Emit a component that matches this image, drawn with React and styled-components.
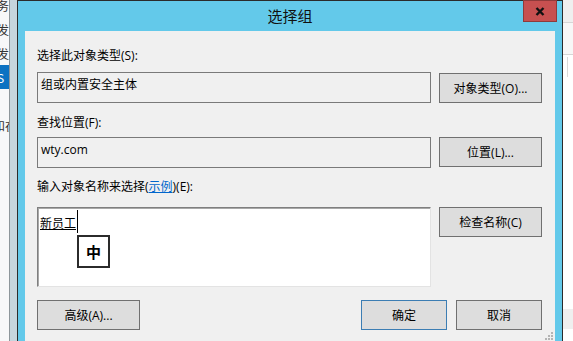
import React from "react";
import styled, { createGlobalStyle } from "styled-components";

const Global = createGlobalStyle`
  html, body { margin: 0; padding: 0; overflow: hidden; background: #fff; }
  body { font-family: "Open Sans", "Noto Sans CJK SC", sans-serif; font-size: 12px; }
`;

const Page = styled.div`
  display: flex;
  width: 573px;
  height: 341px;
  overflow: hidden;
  font-family: "Open Sans", "Noto Sans CJK SC", sans-serif;
`;

const BackList = styled.div`
  width: 9px;
  flex: none;
  background: #f7f8f9;
  display: flex;
  flex-direction: column;
  overflow: hidden;
`;

const BackRow = styled.div`
  height: 24px;
  flex: none;
  display: flex;
  align-items: center;
  white-space: nowrap;
  overflow: hidden;
  font-size: 12px;
  color: ${(p) => (p.$selected ? "#ffffff" : "#333333")};
  background: ${(p) => (p.$selected ? "#0c72c2" : "transparent")};
  font-family: "Noto Sans CJK SC", sans-serif;
  margin-top: ${(p) => p.$mt || 0}px;
`;

const BackText = styled.span`
  flex: none;
  margin-left: ${(p) => p.$shift || 0}px;
`;

const BackEdge = styled.div`
  width: 7px;
  flex: none;
  border-left: 1px solid #8d969b;
  background: #c6d5dd;
`;

const Dialog = styled.div`
  width: 546px;
  flex: none;
  box-sizing: border-box;
  height: 341px;
  background: #63c9ea;
  border: 1px solid #2b2b2b;
  border-bottom: none;
  display: flex;
  flex-direction: column;
`;

const TitleBar = styled.div`
  height: 30px;
  flex: none;
  display: grid;
  grid-template-columns: 1fr auto 1fr;
  align-items: start;
`;

const Title = styled.div`
  grid-column: 2;
  font-family: "Noto Sans CJK SC", sans-serif;
  font-size: 15px;
  line-height: 30px;
  color: #111;
`;

const CloseButton = styled.div`
  grid-column: 3;
  justify-self: end;
  margin-right: 5px;
  width: 34px;
  height: 22px;
  margin-top: -1px;
  box-sizing: border-box;
  background: #c75050;
  border: 1px solid #8f3a3a;
  display: flex;
  align-items: center;
  justify-content: center;
`;

const Content = styled.div`
  flex: 1;
  margin: 0 7px;
  background: #f0f0f0;
  padding: 17px 13px 0 12px;
  display: flex;
  flex-direction: column;
  position: relative;
`;

const Label = styled.div`
  font-size: 12px;
  line-height: 16px;
  height: 16px;
  color: #000;
  margin-top: ${(p) => p.$mt || 0}px;
  white-space: nowrap;
`;

const Link = styled.span`
  color: #0066cc;
  text-decoration: underline;
`;

const Row = styled.div`
  display: grid;
  grid-template-columns: 394px 103px;
  column-gap: 8px;
  align-items: start;
  margin-top: ${(p) => p.$mt || 0}px;
`;

const ReadBox = styled.div`
  box-sizing: border-box;
  height: 31px;
  border: 1px solid #7a7a7a;
  background: #f0f0f0;
  padding: 4px 3px;
  font-size: 12px;
  line-height: 16px;
  color: #000;
`;

const Button = styled.div`
  box-sizing: border-box;
  height: 30px;
  width: ${(p) => p.$w || 103}px;
  border: 1px solid ${(p) => (p.$default ? "#3c7db3" : "#707070")};
  background: #dddddd;
  display: flex;
  align-items: center;
  justify-content: center;
  font-size: 12px;
  color: #000;
  white-space: nowrap;
  margin-top: ${(p) => p.$mt || 0}px;
`;

const InputArea = styled.div`
  box-sizing: border-box;
  height: 80px;
  background: #fff;
  border-style: solid;
  border-width: 1px;
  border-color: #7f7f7f #e3e3e3 #e3e3e3 #7f7f7f;
  box-shadow: inset 1px 1px 0 #a8a8a8;
  padding: 7px 2px;
  font-size: 12px;
  line-height: 16px;
  position: relative;
  display: flex;
  align-items: flex-start;
`;

const Composition = styled.span`
  text-decoration: underline;
  font-family: "Noto Sans CJK SC", sans-serif;
  color: #000;
`;

const Caret = styled.span`
  display: inline-block;
  width: 1px;
  height: 23px;
  background: #000;
  margin-left: 1px;
  margin-top: -5px;
`;

const ImeBox = styled.div`
  position: absolute;
  left: 39px;
  top: 27px;
  width: 33px;
  height: 33px;
  box-sizing: border-box;
  border: 2px solid #2b2b2b;
  background: #fff;
  display: flex;
  align-items: center;
  justify-content: center;
  font-family: "Noto Sans CJK SC", sans-serif;
  font-weight: 700;
  font-size: 15px;
  color: #000;
`;

const BottomRow = styled.div`
  display: flex;
  align-items: center;
  margin-top: 13px;
  gap: 9px;
`;

const Spacer = styled.div`
  flex: 1;
`;

const Grip = styled.svg`
  position: absolute;
  right: 1px;
  bottom: 0;
`;

const BackRight = styled.div`
  width: 10px;
  flex: none;
  background: #ffffff;
  display: flex;
  flex-direction: column;
`;

const RightStrip = styled.div`
  height: ${(p) => p.$h}px;
  flex: none;
  background: ${(p) => p.$bg};
  border-bottom: ${(p) => (p.$line ? "1px solid #d6d6d6" : "none")};
  border-left: ${(p) => (p.$cell ? "1px solid #d9d9d9" : "none")};
  margin-left: ${(p) => (p.$cell ? 4 : 0)}px;
  margin-top: ${(p) => p.$mt || 0}px;
`;

export default function App() {
  return (
    <>
      <Global />
      <Page>
        <BackList>
          <BackRow $mt={-7}>
            <BackText $shift={-3}>务</BackText>
          </BackRow>
          <BackRow>
            <BackText $shift={-3}>发</BackText>
          </BackRow>
          <BackRow>
            <BackText $shift={-3}>发</BackText>
          </BackRow>
          <BackRow $selected>
            <BackText $shift={-3}>S</BackText>
          </BackRow>
          <BackRow />
          <BackRow>
            <BackText $shift={-7}>和在</BackText>
          </BackRow>
        </BackList>
        <BackEdge />
        <Dialog>
          <TitleBar>
            <Title>选择组</Title>
            <CloseButton>
              <svg width="10" height="9" viewBox="0 0 10 9">
                <path d="M1.5 1 L8.5 8 M8.5 1 L1.5 8" stroke="#111" strokeWidth="2.4" strokeLinecap="butt" />
              </svg>
            </CloseButton>
          </TitleBar>
          <Content>
            <Label>选择此对象类型(S):</Label>
            <Row $mt={8}>
              <ReadBox>组或内置安全主体</ReadBox>
              <Button $mt={1}>对象类型(O)...</Button>
            </Row>
            <Label $mt={12}>查找位置(F):</Label>
            <Row $mt={6}>
              <ReadBox>wty.com</ReadBox>
              <Button>位置(L)...</Button>
            </Row>
            <Label $mt={11}>
              输入对象名称来选择(<Link>示例</Link>)(E):
            </Label>
            <Row $mt={12}>
              <InputArea>
                <Composition>新员工</Composition>
                <Caret />
                <ImeBox>中</ImeBox>
              </InputArea>
              <Button>检查名称(C)</Button>
            </Row>
            <BottomRow>
              <Button $w={103}>高级(A)...</Button>
              <Spacer />
              <Button $w={86} $default>确定</Button>
              <Button $w={86}>取消</Button>
            </BottomRow>
            <Grip width="10" height="9" viewBox="0 0 10 9">
              <rect x="7" y="0" width="2" height="2" fill="#b4b4b4" />
              <rect x="4" y="3" width="2" height="2" fill="#b4b4b4" />
              <rect x="7" y="3" width="2" height="2" fill="#b4b4b4" />
              <rect x="1" y="6" width="2" height="2" fill="#b4b4b4" />
              <rect x="4" y="6" width="2" height="2" fill="#b4b4b4" />
              <rect x="7" y="6" width="2" height="2" fill="#b4b4b4" />
            </Grip>
          </Content>
        </Dialog>
        <BackRight>
          <RightStrip $h={22} $bg="#efefef" $line />
          <RightStrip $h={31} $bg="#f7f7f7" $line />
          <RightStrip $h={20} $bg="#ffffff" $cell $mt={2} />
          <RightStrip $h={232} $bg="#ffffff" />
          <RightStrip $h={20} $bg="#efefef" />
        </BackRight>
      </Page>
    </>
  );
}
